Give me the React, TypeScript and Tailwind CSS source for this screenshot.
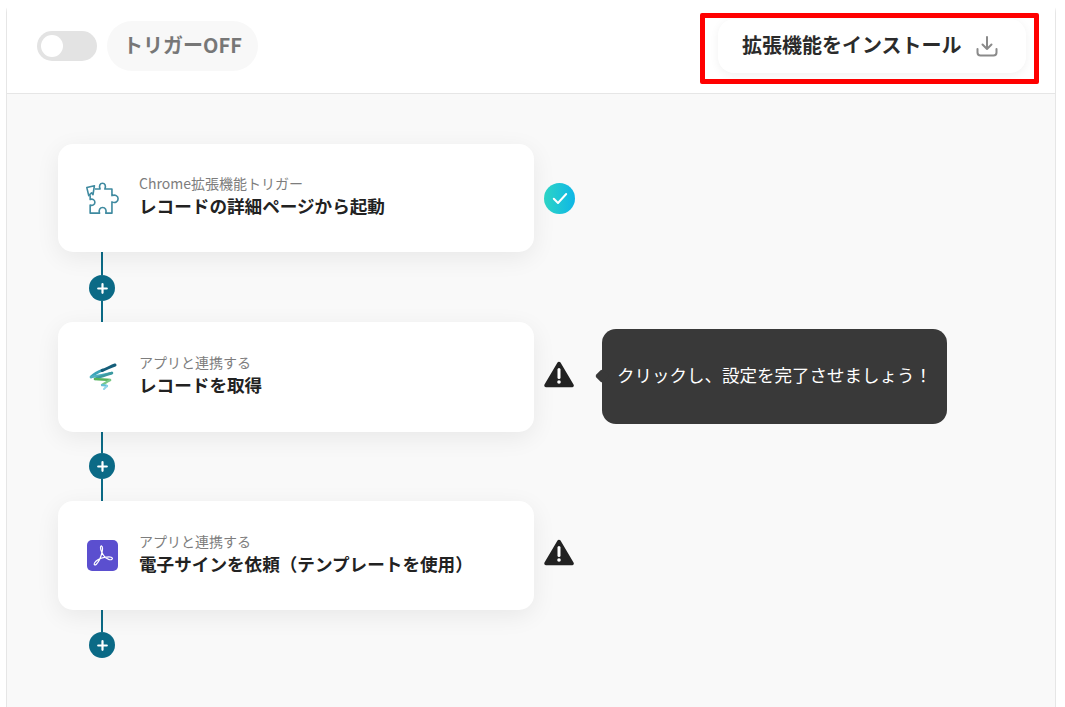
import React from "react";

const font = { fontFamily: '"Noto Sans CJK JP", "Noto Sans", sans-serif' };

function PlusNode({ top, bottom }: { top: string; bottom?: string }) {
  return (
    <div className="ml-[31px] flex w-[26px] flex-col items-center">
      <div className={`${top} w-[2px] bg-[#0b6a86]`} />
      <div className="flex h-[26px] w-[26px] shrink-0 items-center justify-center rounded-full bg-[#0b6a86]">
        <svg width="11" height="11" viewBox="0 0 11 11" fill="none">
          <path d="M5.5 1.2v8.6M1.2 5.5h8.6" stroke="#fff" strokeWidth="2.2" strokeLinecap="round" />
        </svg>
      </div>
      {bottom && <div className={`${bottom} w-[2px] bg-[#0b6a86]`} />}
    </div>
  );
}

function Warning() {
  return (
    <svg width="30" height="27" viewBox="0 0 30 27" className="mb-[6px] mr-[2px] shrink-0">
      <path d="M15 2.5 L28 24.5 H2 Z" fill="#222" stroke="#222" strokeWidth="3.5" strokeLinejoin="round" />
      <path d="M15 8.5v8" stroke="#fff" strokeWidth="3" strokeLinecap="round" />
      <circle cx="15" cy="21" r="1.8" fill="#fff" />
    </svg>
  );
}

function Check() {
  return (
    <div className="mt-[1px] flex h-[31px] w-[31px] shrink-0 items-center justify-center rounded-full bg-gradient-to-r from-[#2dd4c4] to-[#0fb6e6]">
      <svg width="16" height="13" viewBox="0 0 16 13" fill="none">
        <path d="M1.8 6.8 L6 11 L14.2 2" stroke="#fff" strokeWidth="2" strokeLinecap="round" strokeLinejoin="round" />
      </svg>
    </div>
  );
}

function Puzzle() {
  return (
    <svg width="38" height="36" viewBox="0 0 38 36" fill="none" stroke="#3f8aa0" strokeWidth="1.7" strokeLinejoin="round">
      <path d="M11 5 L3 7 L5 15.5 L8 12.5 L9.5 14.5 Z" />
      <path d="M11.5 8.5 H17 c-1.5 -3.5 0 -6 2.5 -6 s4 2.5 2.5 6 h7.5 v7 c3.5 -1.5 6.5 0.3 6.5 3.3 s-3 5 -6.5 3.3 V34 h-6.5 c1 -3.5 -0.5 -6 -3.3 -6 s-4.5 2.5 -3.3 6 H6.5 V25.5 c2.5 1 5 -0.5 5 -3 s-2.5 -4 -5 -3 V15" />
    </svg>
  );
}

function Swirl() {
  return (
    <svg width="30" height="30" viewBox="0 0 30 30" fill="none" strokeLinecap="round" strokeLinejoin="round">
      <path d="M4 15 C8 11 12 9.5 16 8" stroke="#3aa3b8" strokeWidth="2.6" />
      <path d="M15 8.5 C19 7 24 4.5 28 3" stroke="#155e7a" strokeWidth="3" />
      <path d="M4 15 C11 14 19 12.5 25 11" stroke="#4fb0c2" strokeWidth="2.4" />
      <path d="M25 11 C19 13 12 15 8 17" stroke="#3d9aa0" strokeWidth="2.4" />
      <path d="M8 17 C13 17.5 19 17.5 23 18" stroke="#56b35c" strokeWidth="2.6" />
      <path d="M23 18 C20 20 17 21.5 15 23" stroke="#7cc98a" strokeWidth="2.2" />
      <path d="M15 23 C17 23.5 19 23.5 20 24" stroke="#63bfd8" strokeWidth="2.2" />
      <path d="M20 24 C19 25 18 26 17 27" stroke="#8fd3e8" strokeWidth="2" />
    </svg>
  );
}

function Pdf() {
  return (
    <div className="flex h-[31px] w-[31px] items-center justify-center rounded-[5px] bg-[#5b4fcf]">
      <svg width="27" height="27" viewBox="0 0 22 22" fill="none" stroke="#fff" strokeWidth="1" strokeLinejoin="round">
        <path d="M10.2 3.2 c-1.2 0 -1 2.8 0.2 5.2 c1.4 3 3.4 5.2 6 5.9 c1.8 0.5 3 -0.3 2.6 -1.2 c-0.5 -1 -3.4 -1.2 -6.4 -0.6 c-3.4 0.7 -6.6 2.2 -8 4.4 c-1 1.6 0.2 2.4 1.4 1.2 c2 -2 3.8 -6.2 4.6 -9.6 c0.6 -2.6 0.6 -5.1 -0.4 -5.1 Z" />
      </svg>
    </div>
  );
}

function Step({
  icon,
  label,
  title,
  status,
  h,
  children,
}: {
  icon: React.ReactNode;
  label: string;
  title: string;
  status: React.ReactNode;
  h: string;
  children?: React.ReactNode;
}) {
  return (
    <div className="relative flex items-center">
      <div className={`flex ${h} w-[476px] items-center rounded-[15px] bg-white pl-[26px] shadow-[0_6px_24px_rgba(0,0,0,0.07)]`}>
        <div className="flex w-[36px] items-center justify-center">{icon}</div>
        <div className="ml-[19px] flex flex-col gap-[2px] pb-[4px]">
          <div className="text-[14px] leading-[18px] text-[#7d7d7d]">{label}</div>
          <div className="text-[17.6px] font-bold leading-[24px] text-[#222]">{title}</div>
        </div>
      </div>
      <div className="ml-[10px] flex w-[31px] items-center justify-center">{status}</div>
      {children}
    </div>
  );
}

export default function App() {
  return (
    <div className="h-[707px] w-[1065px] overflow-hidden bg-white" style={font}>
      <div className="-mt-[1px] ml-[6px] flex h-[730px] w-[1050px] flex-col rounded-t-[14px] border border-b-0 border-[#e6e6e6]">
        <div className="relative flex h-[94px] shrink-0 items-start justify-between border-b border-[#e6e6e6] bg-white">
          <div className="ml-[30px] mt-[21px] flex items-center">
            <div className="flex h-[30px] w-[60px] items-center rounded-full bg-[#e3e3e3] pl-[4px]">
              <div className="h-[22px] w-[22px] rounded-full bg-white" />
            </div>
            <div className="ml-[10px] flex h-[50px] w-[151px] items-center justify-center rounded-full bg-[#f8f8f8] pb-[2px] text-[20px] font-bold text-[#777]">
              トリガーOFF
            </div>
          </div>
          <div className="mr-[29px] mt-[19px] flex h-[54px] w-[308px] items-center rounded-[16px] bg-white pl-[24px] shadow-[0_2px_10px_rgba(0,0,0,0.06)]">
            <span className="pb-[2px] text-[20px] font-bold text-[#2b2b2b]">拡張機能をインストール</span>
            <svg width="24" height="24" viewBox="0 0 24 24" fill="none" stroke="#8a8a8a" strokeWidth="2" strokeLinecap="round" strokeLinejoin="round" className="ml-[13px]">
              <path d="M12 3v12M7.5 10.5 12 15l4.5-4.5M2.5 15v3.5a3 3 0 0 0 3 3h13a3 3 0 0 0 3-3V15" />
            </svg>
          </div>
          <div className="absolute left-[693px] top-[13px] h-[71px] w-[339px] rounded-[2px] border-[5px] border-[#ff0000]" />
        </div>
        <div className="flex-1 bg-[#f9f9f9] pl-[51px] pt-[50px]">
          <Step h="h-[108px]" icon={<Puzzle />} label="Chrome拡張機能トリガー" title="レコードの詳細ページから起動" status={<Check />} />
          <PlusNode top="h-[23px]" bottom="h-[21px]" />
          <Step h="h-[110px]" icon={<Swirl />} label="アプリと連携する" title="レコードを取得" status={<Warning />}>
            <div className="absolute left-[544px] top-[7px] flex h-[95px] w-[345px] items-center rounded-[14px] bg-[#393939] pb-[2px] pl-[15px] text-[17.5px] text-white">
              <div className="absolute -left-[5px] top-[42px] h-[10px] w-[10px] rotate-45 rounded-[2px] bg-[#393939]" />
              クリックし、設定を完了させましょう！
            </div>
          </Step>
          <PlusNode top="h-[21px]" bottom="h-[22px]" />
          <Step h="h-[109px]" icon={<Pdf />} label="アプリと連携する" title="電子サインを依頼（テンプレートを使用）" status={<Warning />} />
          <PlusNode top="h-[22px]" />
        </div>
      </div>
    </div>
  );
}
